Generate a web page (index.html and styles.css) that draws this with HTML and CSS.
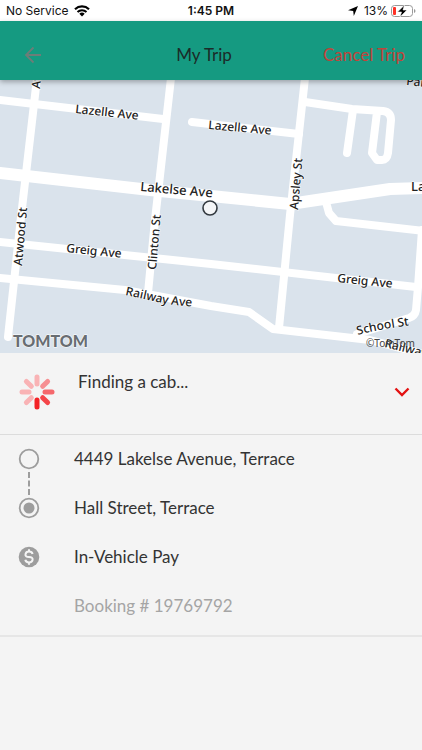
FILE: index.html
```html
<!DOCTYPE html>
<html lang="en">
<head>
  <meta charset="UTF-8">
  <meta name="viewport" content="width=device-width, initial-scale=1.0">
  <title>My Trip</title>
  <link rel="stylesheet" href="styles.css">
</head>
<body>
  <div class="status-bar">
    <div class="status-left">
      <span>No Service</span>
      <svg width="16" height="12" viewBox="0 0 16 12">
        <path d="M1 4.2a10.200 10.200 0 0 1 14 0" fill="none" stroke="#000" stroke-width="2.200"/>
        <path d="M3.500 7a6.600 6.600 0 0 1 9 0" fill="none" stroke="#000" stroke-width="2"/>
        <path d="M8 11.500 5.300 8.800a4 4 0 0 1 5.400 0z"/>
      </svg>
    </div>
    <div class="status-time">1:45 PM</div>
    <div class="status-right">
      <svg class="location" width="10" height="10" viewBox="0 0 10 10">
        <path d="M10 0 5.800 10 5.200 4.900 0 4.300z"/>
      </svg>
      <span>13%</span>
      <svg width="25" height="12" viewBox="0 0 25 12">
        <rect x=".5" y=".5" width="21" height="11" rx="3" fill="none" stroke="#999"/>
        <path d="M23 4v4q1.500-.5 1.500-2T23 4z" fill="#999"/>
        <rect x="2" y="2" width="3" height="8" rx="1" fill="#ff3126"/>
        <path d="M13.500 0 6.500 7h4L9 12l7-7h-4z" stroke="#fff" stroke-width=".6"/>
      </svg>
    </div>
  </div>

  <header class="nav">
    <button class="back" aria-label="Back">
      <svg width="18" height="18" viewBox="0 0 18 18">
        <path d="M17 9H2M9.500 1.500 2 9l7.500 7.500" fill="none" stroke="#6d7d78" stroke-width="1.800"/>
      </svg>
    </button>
    <h1>My Trip</h1>
    <button class="cancel">Cancel Trip</button>
  </header>

  <!-- Map -->
  <div class="map">
    <svg viewBox="0 0 422 273" preserveAspectRatio="xMidYMid slice">
      <defs>
        <path id="railway" d="M125 215 Q148 220 162 223 T200 227"/>
        <path id="school" d="M358 255 Q374 250 412 245"/>
      </defs>
      <g class="roads">
        <path d="M0 20 163 39"/>
        <path d="M171-2 155 140 148 213"/>
        <path d="M37-2 21 137 8 257"/>
        <path d="M192 42 299 54" class="round"/>
        <path d="M305-2 290 135 279 248"/>
        <path d="M305 22 352 29 383 31Q391 32 391 40L388 73Q387 80 382 80L377 80 372 73 377 32"/>
        <path d="M353 30 347 73"/>
        <path d="M326 122 329 133 336 141 424 151"/>
        <path d="M422 150 418 207 416 230Q415 236 409 238L357 254"/>
        <path d="M0 162 211 184 416 207"/>
        <path d="M0 198 125 210 211 226 249 232 273 249 370 260 430 276"/>
        <path d="M0 93 150 110 211 116 290 124 390 109 424 108" class="main"/>
      </g>
      <g class="labels">
        <text transform="translate(75 33) rotate(6)">Lazelle Ave</text>
        <text transform="translate(208 49) rotate(5)">Lazelle Ave</text>
        <text transform="translate(140 111) rotate(5)" class="big">Lakelse Ave</text>
        <text x="411" y="111" class="big">Lakelse Ave</text>
        <text transform="translate(66 172) rotate(6)">Greig Ave</text>
        <text transform="translate(337 202) rotate(6)">Greig Ave</text>
        <text transform="translate(22 186) rotate(-85)">Atwood St</text>
        <text transform="translate(40 9) rotate(-84)">Atwood St</text>
        <text transform="translate(156 190) rotate(-85)">Clinton St</text>
        <text transform="translate(298 130) rotate(-85)">Apsley St</text>
        <text transform="translate(406 5) rotate(6)">Park Ave</text>
        <text><textPath href="#railway">Railway Ave</textPath></text>
        <text><textPath href="#school">School St</textPath></text>
        <text transform="translate(384 267) rotate(14)">Railway Ave</text>
      </g>
      <circle cx="210" cy="128" r="7" fill="#f4f6f8" stroke="#333a40" stroke-width="1.600"/>
      <text x="13" y="267" class="logo">TOMTOM</text>
      <text x="366" y="267" class="credit">©TomTom</text>
    </svg>
  </div>

  <main>
    <section class="finding">
      <svg class="spinner" width="36" height="36" viewBox="-18 -18 36 36">
        <g stroke-width="5" stroke-linecap="round">
          <path d="M0-8V-15" stroke="#f9b3b5"/>
          <path d="M0-8V-15" stroke="#f68f92" transform="rotate(45)"/>
          <path d="M0-8V-15" stroke="#f5686c" transform="rotate(90)"/>
          <path d="M0-8V-15" stroke="#f44549" transform="rotate(135)"/>
          <path d="M0-8V-15" stroke="#f32226" transform="rotate(180)"/>
          <path d="M0-8V-15" stroke="#f9b3b5" transform="rotate(225)"/>
          <path d="M0-8V-15" stroke="#f9b3b5" transform="rotate(270)"/>
          <path d="M0-8V-15" stroke="#f9b3b5" transform="rotate(315)"/>
        </g>
      </svg>
      <p>Finding a cab...</p>
      <button class="toggle" aria-label="Toggle details">
        <svg width="16" height="10" viewBox="0 0 16 10">
          <path d="M1.500 1.500 8 8l6.500-6.500" fill="none" stroke="#e31212" stroke-width="2.400"/>
        </svg>
      </button>
    </section>

    <ul class="details">
      <li>
        <svg width="22" height="22" viewBox="0 0 22 22">
          <circle cx="11" cy="11" r="9.300" fill="none" stroke="#9d9d9d" stroke-width="1.800"/>
        </svg>
        <span>4449 Lakelse Avenue, Terrace</span>
        <i class="link"></i>
      </li>
      <li>
        <svg width="22" height="22" viewBox="0 0 22 22">
          <circle cx="11" cy="11" r="9.300" fill="none" stroke="#9d9d9d" stroke-width="1.800"/>
          <circle cx="11" cy="11" r="5.500" fill="#9d9d9d"/>
        </svg>
        <span>Hall Street, Terrace</span>
      </li>
      <li>
        <svg width="22" height="22" viewBox="0 0 22 22">
          <circle cx="11" cy="11" r="10.300" fill="#9d9d9d"/>
          <path d="M14.600 8Q14 5.600 11 5.600T7.500 8.200 11 11t3.600 2.800T11 16.400 7.300 13.800M11 3.200v2.400M11 16.400v2.400" fill="none" stroke="#f4f4f4" stroke-width="2"/>
        </svg>
        <span>In-Vehicle Pay</span>
      </li>
      <li class="booking"><span>Booking # 19769792</span></li>
    </ul>
  </main>
</body>
</html>
```

FILE: styles.css
```css
* {
  box-sizing: border-box;
}
body {
  margin: 0;
  min-height: 100vh;
  background: #f4f4f4;
  color: #333;
  font-family: Lato, sans-serif;
  font-size: 17px;
}
button {
  background: none;
  border: none;
  padding: 0;
  font: inherit;
  cursor: pointer;
}
svg {
  display: block;
}
.status-bar {
  display: grid;
  grid-template-columns: 1fr auto 1fr;
  align-items: center;
  height: 21px;
  padding: 0 6px;
  background: #fff;
  color: #111;
  font-family: Inter, sans-serif;
  font-size: 12px;
}
.status-left, .status-right {
  display: flex;
  align-items: center;
  gap: 5px;
}
.status-right {
  justify-content: flex-end;
  gap: 3px;
}
.location {
  margin-right: 3px;
}
.status-time {
  font-weight: 600;
}
.nav {
  position: relative;
  z-index: 1;
  display: grid;
  grid-template-columns: 1fr auto 1fr;
  align-items: center;
  height: 59px;
  padding: 8px 17px 0 3px;
  background: #159a81;
  box-shadow: 0 2px 5px rgba(0,0,0,0.3);
}
.nav h1 {
  margin: 0;
  color: #1b2b28;
  font-size: 17px;
  font-weight: 400;
}
.back {
  justify-self: start;
  margin-left: 21px;
}
.cancel {
  justify-self: end;
  color: #c0443a;
}
.map svg {
  width: 100%;
  height: auto;
  background: #dae3ec;
}
.roads path {
  fill: none;
  stroke: #fff;
  stroke-width: 8px;
  stroke-linecap: round;
  stroke-linejoin: round;
}
.roads .main {
  stroke-width: 12px;
}
.labels {
  font-family: "Noto Sans", sans-serif;
  font-size: 12px;
  font-weight: 500;
  fill: #222;
  stroke: #fff;
  stroke-width: 1px;
  paint-order: stroke;
}
.labels .big {
  font-size: 13px;
}
.logo {
  font-size: 16px;
  font-weight: 900;
  fill: #686d72;
  stroke: #fff;
  stroke-width: 1px;
  paint-order: stroke;
}
.credit {
  font-family: "Noto Sans", sans-serif;
  font-size: 10px;
  fill: #444;
}
.finding {
  display: flex;
  align-items: center;
  gap: 23px;
  height: 82px;
  padding: 0 12px 4px 19px;
  border-bottom: 1px solid #dcdcdc;
}
.finding p {
  flex: 1;
  margin: 0 0 20px;
}
.details {
  display: grid;
  gap: 27px;
  margin: 0;
  padding: 13px 18px 18px;
  border-bottom: 2px solid #e6e6e6;
  list-style: none;
}
.details li {
  position: relative;
  display: grid;
  grid-template-columns: 22px 1fr;
  column-gap: 34px;
  align-items: center;
  line-height: 22px;
}
/* dashed line between pickup and destination */
.link {
  position: absolute;
  top: 24px;
  left: 10px;
  height: 23px;
  border-left: 2px dashed #9d9d9d;
}
.booking span {
  grid-column: 2;
  color: #a5a5a5;
}
```
